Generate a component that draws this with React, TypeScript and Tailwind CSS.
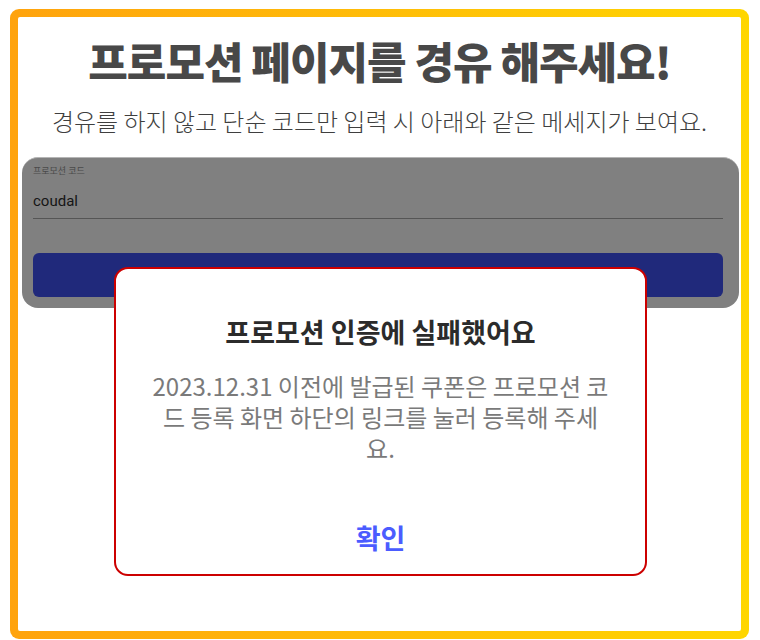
const KR = { fontFamily: '"Noto Sans CJK KR", "Noto Sans", sans-serif' };

function PromoPreview() {
  return (
    <div className="ml-[4px] mr-[2px] rounded-[16px] border-t border-[#b5b5b5] bg-[#808080] pt-[7px] pr-[16px] pb-[11px] pl-[11px]">
      <div className="text-[9px] leading-[12px] text-[#4a4a4a]">프로모션 코드</div>
      <div className="flex h-[42px] items-center border-b border-[#555555] pt-[7px] font-['Roboto',sans-serif] text-[15px] text-[#151515]">
        coudal
      </div>
      <div className="mt-[34px] h-[44px] rounded-[6px] bg-[#20297b]" />
    </div>
  );
}

function FailDialog() {
  return (
    <div className="absolute top-[250px] left-[96px] flex h-[309px] w-[533px] flex-col items-center rounded-[14px] border-2 border-[#cc0000] bg-white">
      <div className="mt-[45px] text-[27px] leading-[36px] font-bold text-[#2b2b2b]">
        프로모션 인증에 실패했어요
      </div>
      <div className="mt-[20px] text-center text-[24px] leading-[31px] text-[#7a7a7a]">
        2023.12.31 이전에 발급된 쿠폰은 프로모션 코
        <br />
        드 등록 화면 하단의 링크를 눌러 등록해 주세
        <br />
        요.
      </div>
      <div className="mt-auto mb-[18px] text-[27px] leading-[36px] font-bold text-[#4b5cff]">
        확인
      </div>
    </div>
  );
}

export default function App() {
  return (
    <div className="min-h-screen bg-white pt-[9px] pl-[10px]" style={KR}>
      <div className="h-[630px] w-[739px] rounded-[9px] bg-gradient-to-r from-[#ffa30d] to-[#ffd600] p-[8px]">
        <div className="relative h-full rounded-[2px] bg-white">
          <h1 className="pt-[17px] text-center text-[43px] leading-[52px] font-black tracking-[-1px] text-[#484848]">
            프로모션 페이지를 경유 해주세요!
          </h1>
          <p className="mt-[20px] text-center text-[24px] leading-[30px] font-light text-[#3f3f3f]">
            경유를 하지 않고 단순 코드만 입력 시 아래와 같은 메세지가 보여요.
          </p>
          <div className="mt-[21px]">
            <PromoPreview />
          </div>
          <FailDialog />
        </div>
      </div>
    </div>
  );
}
